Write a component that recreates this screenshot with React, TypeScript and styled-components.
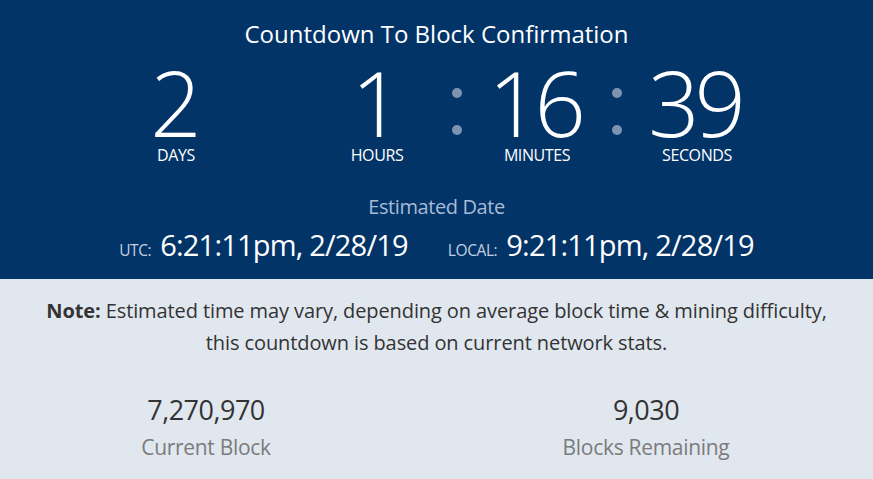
import React from "react";
import styled, { createGlobalStyle } from "styled-components";

const GlobalStyle = createGlobalStyle`
  html, body {
    margin: 0;
    padding: 0;
    background: #e1e7ef;
  }
  body {
    font-family: "Open Sans", "Noto Sans", "Liberation Sans", sans-serif;
  }
`;

interface Unit {
  value: string;
  label: string;
  colonBefore?: boolean;
  gap: number;
}

const units: Unit[] = [
  { value: "2", label: "Days", gap: 0 },
  { value: "1", label: "Hours", gap: 81 },
  { value: "16", label: "Minutes", colonBefore: true, gap: 0 },
  { value: "39", label: "Seconds", colonBefore: true, gap: 0 },
];

const App: React.FC = () => {
  return (
    <>
      <GlobalStyle />
      <Page>
        <Hero>
          <Title>Countdown To Block Confirmation</Title>
          <Timer>
            {units.map((u) => (
              <React.Fragment key={u.label}>
                {u.colonBefore && <Colon />}
                <UnitBox $gap={u.gap}>
                  <Digits>{u.value}</Digits>
                  <UnitLabel>{u.label}</UnitLabel>
                </UnitBox>
              </React.Fragment>
            ))}
          </Timer>
          <EstTitle>Estimated Date</EstTitle>
          <DateRow>
            <DateItem>
              <Zone>UTC:</Zone>
              <Stamp>6:21:11pm, 2/28/19</Stamp>
            </DateItem>
            <DateItem>
              <Zone>LOCAL:</Zone>
              <Stamp>9:21:11pm, 2/28/19</Stamp>
            </DateItem>
          </DateRow>
        </Hero>
        <Info>
          <Note>
            <strong>Note:</strong> Estimated time may vary, depending on average
            block time &amp; mining difficulty,
            <br />
            this countdown is based on current network stats.
          </Note>
          <Stats>
            <Stat>
              <StatValue>7,270,970</StatValue>
              <StatLabel>Current Block</StatLabel>
            </Stat>
            <Stat>
              <StatValue>9,030</StatValue>
              <StatLabel>Blocks Remaining</StatLabel>
            </Stat>
          </Stats>
        </Info>
      </Page>
    </>
  );
};

const Page = styled.div`
  width: 873px;
  min-height: 479px;
  overflow: hidden;
`;

const Hero = styled.section`
  background: #023468;
  color: #ffffff;
  height: 279px;
  box-sizing: border-box;
  padding-top: 18px;
  display: flex;
  flex-direction: column;
  align-items: center;
`;

const Title = styled.h1`
  margin: 0;
  font-size: 24px;
  font-weight: 400;
  line-height: 32px;
  letter-spacing: 0;
`;

const Timer = styled.div`
  display: flex;
  align-items: flex-start;
  margin-top: 12px;
`;

const UnitBox = styled.div<{ $gap: number }>`
  width: 120px;
  margin-left: ${(p) => p.$gap}px;
  display: flex;
  flex-direction: column;
  align-items: center;
`;

const Digits = styled.div`
  font-size: 90px;
  font-weight: 300;
  line-height: 80px;
  letter-spacing: -5px;
  margin-right: 5px;
`;

const UnitLabel = styled.div`
  font-size: 16px;
  text-transform: uppercase;
  line-height: 20px;
  margin-top: 3px;
  letter-spacing: -0.4px;
`;

const Colon = styled.div`
  width: 40px;
  height: 80px;
  box-sizing: border-box;
  padding-top: 26px;
  display: flex;
  flex-direction: column;
  align-items: center;
  gap: 27px;

  &::before,
  &::after {
    content: "";
    width: 10px;
    height: 10px;
    border-radius: 50%;
    background: #7c93b1;
  }
`;

const EstTitle = styled.div`
  margin-top: 30px;
  font-size: 20px;
  line-height: 24px;
  color: #a7bbd6;
  letter-spacing: -0.4px;
`;

const DateRow = styled.div`
  display: flex;
  gap: 40px;
  margin-top: 8px;
`;

const DateItem = styled.div`
  display: flex;
  align-items: baseline;
  gap: 9px;
`;

const Zone = styled.span`
  font-size: 15.5px;
  color: #c4d0e2;
  letter-spacing: -0.4px;
`;

const Stamp = styled.span`
  font-size: 29px;
  line-height: 36px;
  letter-spacing: -0.8px;
`;

const Info = styled.section`
  background: #e1e7ef;
  padding-top: 16px;
  display: flex;
  flex-direction: column;
  align-items: center;
`;

const Note = styled.p`
  margin: 0;
  text-align: center;
  font-size: 20px;
  line-height: 32px;
  color: #333333;
  letter-spacing: -0.1px;

  strong {
    font-weight: 700;
  }
`;

const Stats = styled.div`
  display: grid;
  grid-template-columns: repeat(2, 440px);
  justify-content: center;
  width: 852px;
  margin-right: 21px;
  margin-top: 34px;
`;

const Stat = styled.div`
  display: flex;
  flex-direction: column;
  align-items: center;
`;

const StatValue = styled.div`
  font-size: 27px;
  line-height: 34px;
  color: #333333;
  letter-spacing: -0.5px;
`;

const StatLabel = styled.div`
  font-size: 21px;
  line-height: 30px;
  color: #7b7b7b;
  margin-top: 5px;
  letter-spacing: -0.3px;
`;

export default App;
